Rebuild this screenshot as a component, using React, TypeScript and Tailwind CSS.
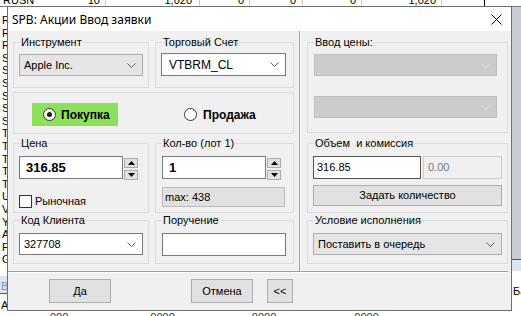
import React from 'react'

const chevron = (color: string) => (
  <svg width="9" height="5" viewBox="0 0 9 5" className="shrink-0">
    <path d="M0.5 0.5 L4.5 4.5 L8.5 0.5" fill="none" stroke={color} strokeWidth="1" />
  </svg>
)

type ComboKind = 'grey' | 'white' | 'disabled'

function Combo({ text, kind, className }: { text?: string; kind: ComboKind; className: string }) {
  const look =
    kind === 'grey'
      ? 'bg-[#e5e5e5] border-[#adadad]'
      : kind === 'white'
        ? 'bg-white border-[#7a7a7a]'
        : 'bg-[#cccccc] border-[#bfbfbf]'
  return (
    <div className={`flex items-center justify-between border pl-[4px] pr-[6px] text-[11px] ${look} ${className}`}>
      <span>{text}</span>
      {chevron(kind === 'disabled' ? '#dedede' : '#606060')}
    </div>
  )
}

function Group({ label, className, children }: { label?: string; className: string; children: React.ReactNode }) {
  return (
    <fieldset className={`border border-[#dcdcdc] min-w-0 ${className}`}>
      {label && <legend className="ml-[6px] px-[1px] text-[11px] leading-[13px] whitespace-pre">{label}</legend>}
      {children}
    </fieldset>
  )
}

function Spin() {
  const tri = (up: boolean) => (
    <svg width="7" height="4" viewBox="0 0 7 4">
      <path d={up ? 'M3.5 0 L7 4 L0 4 Z' : 'M0 0 L7 0 L3.5 4 Z'} fill="#000" />
    </svg>
  )
  return (
    <div className="flex flex-col gap-[2px] mt-[2px] ml-[1px]">
      <div className="w-[14px] h-[10px] flex items-center justify-center bg-[#e1e1e1] border border-[#adadad]">{tri(true)}</div>
      <div className="w-[14px] h-[10px] flex items-center justify-center bg-[#e1e1e1] border border-[#adadad]">{tri(false)}</div>
    </div>
  )
}

function Radio({ checked }: { checked?: boolean }) {
  return (
    <span className="w-[13px] h-[13px] rounded-full border border-[#333] bg-white flex items-center justify-center shrink-0">
      {checked && <span className="w-[5px] h-[5px] rounded-full bg-[#1a1a1a]" />}
    </span>
  )
}

function Btn({ label, className }: { label: string; className: string }) {
  return (
    <div className={`h-[24px] flex items-center justify-center bg-[#e1e1e1] border border-[#adadad] text-[11px] ${className}`}>
      {label}
    </div>
  )
}

const tickers = ['ROSN', 'RTKM', 'RUAL', 'SBER', 'SBERP', 'SIBN', 'SNGS', 'SNGSP', 'SVAV', 'TATN', 'TATNP', 'TCSG', 'TRNFP', 'TGKA', 'UPRO', 'VTBR', 'YNDX', 'AFLT', 'FEES', 'GAZP']

function Background() {
  return (
    <div className="flex flex-col w-full h-full text-[11px] text-black">
      <div className="h-[7px] overflow-hidden border-b border-[#7a7a7a] shrink-0">
        <div className="flex h-[12px] -mt-[6px] leading-[12px]">
          <div className="w-[86px] pl-[3px]">RUSN</div>
          <div className="w-[20px] text-right pr-[5px] border-r border-[#c8c8c8]">10</div>
          <div className="w-[94px] text-right pr-[7px] border-r border-[#c8c8c8]">1,020</div>
          <div className="w-[50px] text-right pr-[5px] border-r border-[#c8c8c8]">0</div>
          <div className="w-[53px] text-right pr-[6px] border-r border-[#c8c8c8]">0</div>
          <div className="w-[59px] text-right pr-[5px] border-r border-[#c8c8c8]">0</div>
          <div className="w-[80px] text-right pr-[5px] border-r border-[#c8c8c8]">1,020</div>
          <div className="w-[43px] border-r border-black" />
        </div>
      </div>
      <div className="flex flex-1 min-h-0">
        <div className="w-[7px] overflow-hidden flex flex-col pt-[7px] leading-[12.6px]">
          <div className="h-[255px] overflow-hidden">
            {tickers.map((t) => (
              <div key={t} className="pl-[2px] whitespace-nowrap">{t}</div>
            ))}
          </div>
          <div className="mt-[7px] bg-[#dce6f2] text-[#7f8fa6] pl-[1px] h-[18px] pt-[4px] leading-[12px] border-b border-[#555]">Вр</div>
          <div className="pl-[1px] mt-[5px] leading-[12px]">Ауц</div>
        </div>
        <div className="flex-1 flex flex-col justify-end">
          <div className="h-[5px] overflow-hidden">
            <div className="flex leading-[12px] text-[#333]">
              <span className="ml-[43px]">000</span>
              <span className="ml-[82px]">0000</span>
              <span className="ml-[77px]">0000</span>
              <span className="ml-[78px]">0000</span>
            </div>
          </div>
        </div>
        <div className="w-[10px] flex flex-col">
          <div className="h-[252px] bg-[#c9cdd3] border-l border-[#8a8a8a]" />
          <div className="h-[12px] bg-[#dce6f2] border-t border-[#555]" />
          <div className="pl-[2px] pt-[12px] whitespace-nowrap">Ба</div>
        </div>
      </div>
    </div>
  )
}

export default function App() {
  return (
    <div className="relative w-[521px] h-[316px] overflow-hidden bg-white font-['Liberation_Sans',Arial,sans-serif] text-black">
      <Background />

      <div className="absolute left-[7px] top-[6px] w-[505px] h-[305px] border border-[#6e6e6e] bg-[#f0f0f0] flex flex-col">
        {/* title bar */}
        <div className="h-[24px] bg-white flex items-center justify-between pl-[4px] pr-[9px] shrink-0">
          <span className="font-['Noto_Sans',sans-serif] text-[12px] mt-[1px]">SPB: Акции Ввод заявки</span>
          <svg width="11" height="11" viewBox="0 0 11 11">
            <path d="M0.5 0.5 L10.5 10.5 M10.5 0.5 L0.5 10.5" stroke="#000" strokeWidth="1" />
          </svg>
        </div>

        <div className="flex h-[240px] shrink-0">
          {/* left column */}
          <div className="w-[291px] pl-[5px] pt-[5px] flex flex-col">
            <div className="flex gap-[6px]">
              <Group label="Инструмент" className="w-[136px] h-[52px]">
                <div className="pl-[5px] pt-[5px]">
                  <Combo kind="grey" text="Apple Inc." className="w-[124px] h-[22px]" />
                </div>
              </Group>
              <Group label="Торговый Счет" className="w-[139px] h-[52px]">
                <div className="pl-[5px] pt-[4px]">
                  <Combo kind="white" text="VTBRM_CL" className="w-[125px] h-[23px] text-[12px] pl-[7px]" />
                </div>
              </Group>
            </div>

            <Group className="w-[281px] h-[42px] mt-[4px]">
              <div className="flex items-center pt-[10px] pl-[18px]">
                <div className="w-[86px] h-[23px] bg-[#8ee05a] flex items-center pl-[11px] gap-[5px] font-bold text-[12px]">
                  <Radio checked />
                  <span>Покупка</span>
                </div>
                <div className="flex items-center ml-[66px] gap-[6px] font-bold text-[12px]">
                  <Radio />
                  <span>Продажа</span>
                </div>
              </div>
            </Group>

            <div className="flex gap-[6px] mt-[3px]">
              <Group label="Цена" className="w-[136px] h-[76px]">
                <div className="pl-[5px] pt-[6px]">
                  <div className="flex">
                    <div className="w-[104px] h-[23px] bg-white border border-[#7a7a7a] flex items-center pl-[6px] font-bold text-[13px]">316.85</div>
                    <Spin />
                  </div>
                  <div className="flex items-center gap-[3px] mt-[13px] text-[11px]">
                    <span className="w-[13px] h-[13px] border border-[#333] bg-white" />
                    <span>Рыночная</span>
                  </div>
                </div>
              </Group>
              <Group label="Кол-во (лот 1)" className="w-[139px] h-[76px]">
                <div className="pl-[6px] pt-[6px]">
                  <div className="flex">
                    <div className="w-[104px] h-[23px] bg-white border border-[#7a7a7a] flex items-center pl-[6px] font-bold text-[13px]">1</div>
                    <Spin />
                  </div>
                  <div className="w-[123px] h-[20px] mt-[7px] bg-[#e1e1e1] border border-[#bcbcbc] flex items-center pl-[2px] text-[11px]">max: 438</div>
                </div>
              </Group>
            </div>

            <div className="flex gap-[6px] mt-[1px]">
              <Group label="Код Клиента" className="w-[136px] h-[50px]">
                <div className="pl-[5px] pt-[6px]">
                  <Combo kind="white" text="327708" className="w-[124px] h-[22px]" />
                </div>
              </Group>
              <Group label="Поручение" className="w-[139px] h-[50px]">
                <div className="pl-[6px] pt-[6px]">
                  <div className="w-[124px] h-[23px] bg-white border border-[#7a7a7a]" />
                </div>
              </Group>
            </div>
          </div>

          {/* vertical separator */}
          <div className="w-[2px] h-[240px] border-l border-[#a0a0a0] border-r border-r-white" />

          {/* right column */}
          <div className="flex-1 pl-[6px] pt-[5px] flex flex-col">
            <Group label="Ввод цены:" className="w-[201px] h-[97px]">
              <div className="pl-[6px] pt-[5px] flex flex-col gap-[20px]">
                <Combo kind="disabled" className="w-[183px] h-[22px]" />
                <Combo kind="disabled" className="w-[183px] h-[22px]" />
              </div>
            </Group>
            <Group label="Объем  и комиссия" className="w-[201px] h-[76px] mt-[4px]">
              <div className="pl-[5px] pt-[6px]">
                <div className="flex gap-[2px]">
                  <div className="w-[108px] h-[23px] bg-white border border-[#555] flex items-center pl-[3px] text-[11px]">316.85</div>
                  <div className="w-[79px] h-[23px] bg-[#f0f0f0] border border-[#cfcfcf] flex items-center pl-[4px] text-[11px] text-[#7a7a7a]">0.00</div>
                </div>
                <div className="w-[189px] h-[21px] mt-[6px] bg-[#e1e1e1] border border-[#adadad] flex items-center justify-center text-[11px]">Задать количество</div>
              </div>
            </Group>
            <Group label="Условие исполнения" className="w-[201px] h-[50px] mt-[1px]">
              <div className="pl-[5px] pt-[6px]">
                <Combo kind="grey" text="Поставить в очередь" className="w-[189px] h-[22px]" />
              </div>
            </Group>
          </div>
        </div>

        {/* horizontal separator */}
        <div className="h-[2px] mr-[3px] border-t border-[#a0a0a0] border-b border-b-white shrink-0" />

        <div className="flex pt-[6px] pl-[41px]">
          <Btn label="Да" className="w-[62px]" />
          <Btn label="Отмена" className="w-[62px] ml-[80px]" />
          <Btn label="<<" className="w-[26px] ml-[14px]" />
        </div>
      </div>
    </div>
  )
}
